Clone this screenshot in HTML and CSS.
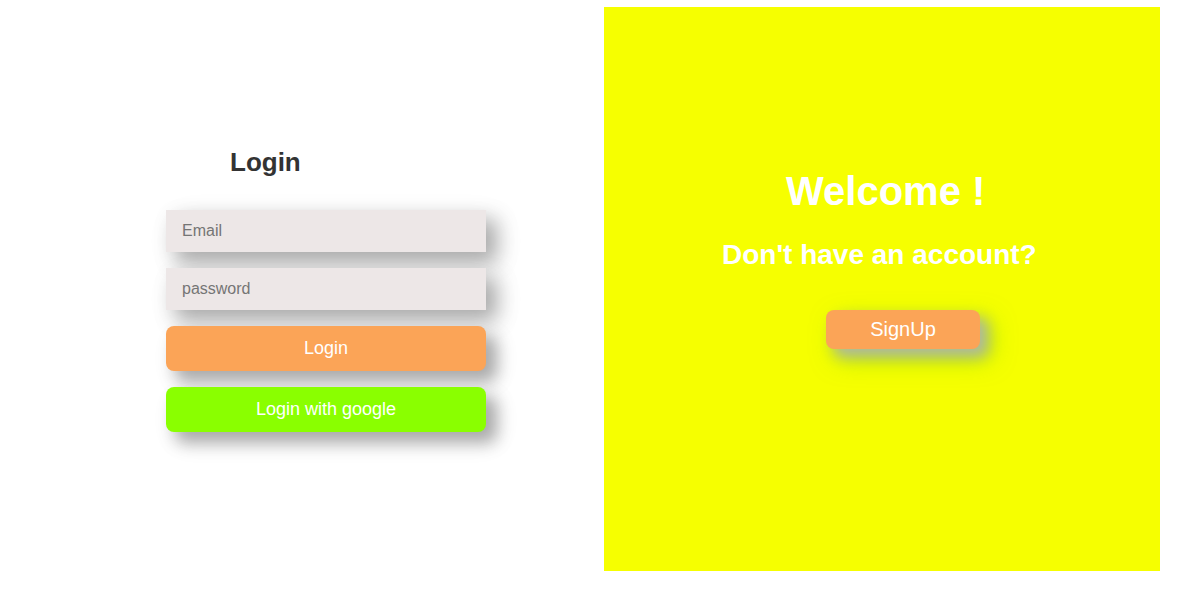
FILE: index.html
```html
<!DOCTYPE html>
<html lang="en">
<head>
<meta charset="utf-8">
<meta name="viewport" content="width=device-width, initial-scale=1">
<title>Login</title>
<link rel="stylesheet" href="styles.css">
</head>
<body>
<main class="page">
  <section class="login">
    <form class="login-form">
      <h1 class="login-title">Login</h1>
      <input class="field" type="email" placeholder="Email" aria-label="Email">
      <input class="field" type="password" placeholder="password" aria-label="Password">
      <button class="button button-login" type="submit">Login</button>
      <button class="button button-google" type="button">Login with google</button>
    </form>
  </section>
  <section class="welcome">
    <h2 class="welcome-title">Welcome !</h2>
    <p class="welcome-text">Don't have an account?</p>
    <button class="button button-signup" type="button">SignUp</button>
  </section>
</main>
</body>
</html>
```
FILE: styles.css
```css
* {
  box-sizing: border-box;
}

body {
  margin: 0;
  background: #fff;
  font-family: "Liberation Sans", Arial, sans-serif;
}

.page {
  display: grid;
  grid-template-columns: 1fr 1fr;
  gap: 28px;
  min-height: 100vh;
  padding: 7px 19px 30px 20px;
}

.login {
  padding: 140px 90px 0 146px;
}

.login-form {
  display: flex;
  flex-direction: column;
  gap: 16px;
  max-width: 320px;
}

.login-title {
  margin: 0 0 17px 64px;
  color: #333;
  font-size: 26px;
  line-height: 30px;
}

.field {
  width: 100%;
  height: 42px;
  padding: 0 16px;
  border: 0;
  background: #ede7e7;
  box-shadow: 10px 10px 20px #aaa, 10px 10px 32px rgba(0, 0, 0, 0.08);
  font-family: inherit;
  font-size: 16px;
}

.field::placeholder {
  color: #757575;
}

.button {
  height: 45px;
  padding: 0;
  border: 0;
  border-radius: 8px;
  box-shadow: 10px 10px 16px #aaa, 10px 10px 24px rgba(0, 0, 0, 0.1);
  color: #fff;
  font-family: inherit;
  font-size: 18px;
}

.button-login {
  background: #fba457;
}

.button-google {
  background: #8aff00;
}

.welcome {
  display: flex;
  flex-direction: column;
  align-items: flex-start;
  padding: 160px 0 0 118px;
  background: #f6ff00;
  color: #fff;
}

.welcome-title {
  margin: 0 0 0 64px;
  font-size: 40px;
  line-height: 48px;
}

.welcome-text {
  margin: 24px 0 39px;
  font-size: 28px;
  font-weight: bold;
  line-height: 32px;
}

.button-signup {
  width: 154px;
  height: 39px;
  margin-left: 104px;
  background: #fba457;
  box-shadow: 8px 8px 14px #b0b8a0, 10px 10px 24px rgba(100, 200, 0, 0.5);
  font-size: 20px;
}
```
